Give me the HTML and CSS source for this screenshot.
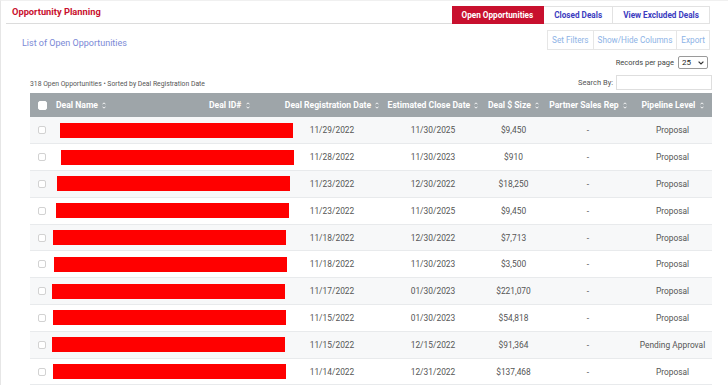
FILE: index.html
```html
<!DOCTYPE html>
<html>
<head>
<meta charset="utf-8">
<link rel="stylesheet" href="styles.css">
</head>
<body>
<div class="page">
  <div class="topbar">
    <div class="title">Opportunity Planning</div>
    <nav class="tabs">
      <span class="tab active">Open Opportunities</span>
      <span class="tab">Closed Deals</span>
      <span class="tab">View Excluded Deals</span>
    </nav>
  </div>
  <div class="subbar">
    <div class="list-title">List of Open Opportunities</div>
    <div class="btn-group">
      <span class="btn">Set Filters</span>
      <span class="btn">Show/Hide Columns</span>
      <span class="btn">Export</span>
    </div>
  </div>
  <div class="records">
    <span>Records per page</span>
    <span class="select">25 <svg width="6" height="4" viewBox="0 0 6 4"><path d="M0.6 0.6 L3 3 L5.4 0.6" fill="none" stroke="#333" stroke-width="1.2"/></svg></span>
  </div>
  <div class="meta-row">
    <span class="count">318 Open Opportunities &bull; Sorted by Deal Registration Date</span>
    <label class="search">Search By: <span class="input"></span></label>
  </div>
  <table class="grid">
    <colgroup>
      <col class="c-cb"><col class="c-name"><col class="c-id"><col class="c-reg"><col class="c-est"><col class="c-size"><col class="c-rep"><col class="c-pipe">
    </colgroup>
    <thead>
      <tr>
        <th class="cb-cell"><span class="cb head"></span></th>
        <th class="left">Deal Name <i class="sort"></i></th>
        <th class="left">Deal ID# <i class="sort"></i></th>
        <th>Deal Registration Date <i class="sort"></i></th>
        <th>Estimated Close Date <i class="sort"></i></th>
        <th>Deal $ Size <i class="sort"></i></th>
        <th>Partner Sales Rep <i class="sort"></i></th>
        <th>Pipeline Level <i class="sort"></i></th>
      </tr>
    </thead>
    <tbody>
      <tr><td class="cb-cell"><span class="cb"></span></td><td colspan="2"><div class="redact"></div></td><td>11/29/2022</td><td>11/30/2025</td><td>$9,450</td><td>-</td><td>Proposal</td></tr>
      <tr><td class="cb-cell"><span class="cb"></span></td><td colspan="2"><div class="redact"></div></td><td>11/28/2022</td><td>11/30/2023</td><td>$910</td><td>-</td><td>Proposal</td></tr>
      <tr><td class="cb-cell"><span class="cb"></span></td><td colspan="2"><div class="redact"></div></td><td>11/23/2022</td><td>12/30/2022</td><td>$18,250</td><td>-</td><td>Proposal</td></tr>
      <tr><td class="cb-cell"><span class="cb"></span></td><td colspan="2"><div class="redact"></div></td><td>11/23/2022</td><td>11/30/2025</td><td>$9,450</td><td>-</td><td>Proposal</td></tr>
      <tr><td class="cb-cell"><span class="cb"></span></td><td colspan="2"><div class="redact"></div></td><td>11/18/2022</td><td>12/30/2022</td><td>$7,713</td><td>-</td><td>Proposal</td></tr>
      <tr><td class="cb-cell"><span class="cb"></span></td><td colspan="2"><div class="redact"></div></td><td>11/18/2022</td><td>11/30/2023</td><td>$3,500</td><td>-</td><td>Proposal</td></tr>
      <tr><td class="cb-cell"><span class="cb"></span></td><td colspan="2"><div class="redact"></div></td><td>11/17/2022</td><td>01/30/2023</td><td>$221,070</td><td>-</td><td>Proposal</td></tr>
      <tr><td class="cb-cell"><span class="cb"></span></td><td colspan="2"><div class="redact"></div></td><td>11/15/2022</td><td>01/30/2023</td><td>$54,818</td><td>-</td><td>Proposal</td></tr>
      <tr><td class="cb-cell"><span class="cb"></span></td><td colspan="2"><div class="redact"></div></td><td>11/15/2022</td><td>12/15/2022</td><td>$91,364</td><td>-</td><td>Pending Approval</td></tr>
      <tr><td class="cb-cell"><span class="cb"></span></td><td colspan="2"><div class="redact"></div></td><td>11/14/2022</td><td>12/31/2022</td><td>$137,468</td><td>-</td><td>Proposal</td></tr>
    </tbody>
  </table>
</div>
</body>
</html>
```
FILE: styles.css
```css
* { box-sizing: border-box; }
html, body { margin: 0; padding: 0; background: #fff; }
body {
  font-family: Roboto, "Liberation Sans", sans-serif;
  color: #555;
  width: 728px;
  height: 385px;
  overflow: hidden;
}
.page {
  height: 385px;
  border-left: 1px solid #e6e6e6;
  border-top: 1px solid #f0f0f0;
}
.topbar {
  display: flex;
  align-items: flex-end;
  margin-left: 5px;
  margin-right: 18px;
  height: 23px;
}
.title {
  flex: 1;
  height: 23px;
  line-height: 22px;
  border-bottom: 1px solid #dcdcdc;
  padding-left: 6px;
  font-size: 9.3px;
  font-weight: 700;
  color: #c8102e;
}
.tabs { display: flex; }
.tab {
  height: 18px;
  line-height: 16px;
  padding: 0 10px;
  border: 1px solid #e2e2e2;
  border-left: 0;
  font-size: 8.2px;
  font-weight: 700;
  color: #3c3cc0;
  background: #fff;
}
.tab.active {
  background: #c8102e;
  border-color: #c8102e;
  color: #fff;
}
.subbar {
  display: flex;
  justify-content: space-between;
  margin: 6px 18px 0 21px;
  height: 20px;
}
.list-title {
  padding-top: 6px;
  line-height: 14px;
  font-size: 9px;
  color: #7b89d6;
}
.btn-group { display: flex; }
.btn {
  height: 20px;
  line-height: 18px;
  padding: 0 4px;
  border: 1px solid #e6e6e6;
  border-left: 0;
  font-size: 8.2px;
  color: #8db3e6;
}
.btn:first-child { border-left: 1px solid #e6e6e6; }
.records {
  display: flex;
  justify-content: flex-end;
  align-items: center;
  gap: 4px;
  margin: 6px 20px 0 0;
  height: 13px;
  font-size: 7.5px;
  color: #444;
}
.select {
  display: flex;
  align-items: center;
  justify-content: space-between;
  width: 30px;
  height: 13px;
  padding: 0 3px;
  border: 1px solid #9a9a9a;
  border-radius: 2px;
  font-size: 8px;
  color: #222;
}
.meta-row {
  display: flex;
  justify-content: space-between;
  align-items: flex-end;
  margin: 6px 16px 0 29px;
  height: 15px;
}
.count {
  font-size: 6.8px;
  line-height: 9px;
  color: #555;
  padding-bottom: 1px;
}
.search {
  display: flex;
  align-items: center;
  gap: 3px;
  font-size: 7.5px;
  color: #555;
}
.input {
  display: block;
  width: 96px;
  height: 15px;
  border: 1px solid #dedede;
}
.grid {
  margin: 3px 0 0 29px;
  width: 682px;
  table-layout: fixed;
  border-collapse: collapse;
}
.c-cb { width: 21px; }
.c-name { width: 153px; }
.c-id { width: 78px; }
.c-reg { width: 100px; }
.c-est { width: 102px; }
.c-size { width: 59px; }
.c-rep { width: 90px; }
.c-pipe { width: 79px; }
.grid th {
  height: 24px;
  padding: 0;
  background: #9ea5a9;
  color: #fff;
  font-size: 8.6px;
  font-weight: 700;
  white-space: nowrap;
  text-align: center;
}
.grid th.left { text-align: left; padding-left: 5px; }
.grid td {
  height: 26.8px;
  padding: 0;
  font-size: 8.4px;
  color: #555;
  text-align: center;
  border-bottom: 1px solid #e8eaec;
  white-space: nowrap;
}
.grid tbody tr:nth-child(odd) td { background: #f7f8f9; }
.cb-cell { text-align: left !important; padding-left: 8px !important; }
.cb {
  display: block;
  width: 8px;
  height: 8px;
  border: 1px solid #d2d2d2;
  border-radius: 2px;
  background: #fff;
}
.cb.head { border-color: #fff; width: 9px; height: 9px; }
.sort {
  display: inline-block;
  width: 4px;
  height: 7px;
  margin-left: 2px;
  vertical-align: -1px;
  background:
    url("data:image/svg+xml;utf8,<svg xmlns='http://www.w3.org/2000/svg' width='4' height='7' viewBox='0 0 4 7'><path d='M0.5 2.3 L2 0.8 L3.5 2.3 M0.5 4.7 L2 6.2 L3.5 4.7' fill='none' stroke='white' stroke-width='0.9'/></svg>") no-repeat;
}
.redact {
  position: relative;
  z-index: 1;
  width: 233px;
  height: 15px;
  background: #ff0000;
}
.grid tbody tr:nth-child(1) .redact { margin-left: 9px; }
.grid tbody tr:nth-child(2) .redact { margin-left: 10px; }
.grid tbody tr:nth-child(3) .redact { margin-left: 6px; }
.grid tbody tr:nth-child(4) .redact { margin-left: 5px; }
.grid tbody tr:nth-child(5) .redact { margin-left: 2px; }
.grid tbody tr:nth-child(6) .redact { margin-left: 3px; }
.grid tbody tr:nth-child(7) .redact { margin-left: 1px; }
.grid tbody tr:nth-child(8) .redact { margin-left: 2px; }
.grid tbody tr:nth-child(9) .redact { margin-left: 1px; }
.grid tbody tr:nth-child(10) .redact { margin-left: 2px; }
```
